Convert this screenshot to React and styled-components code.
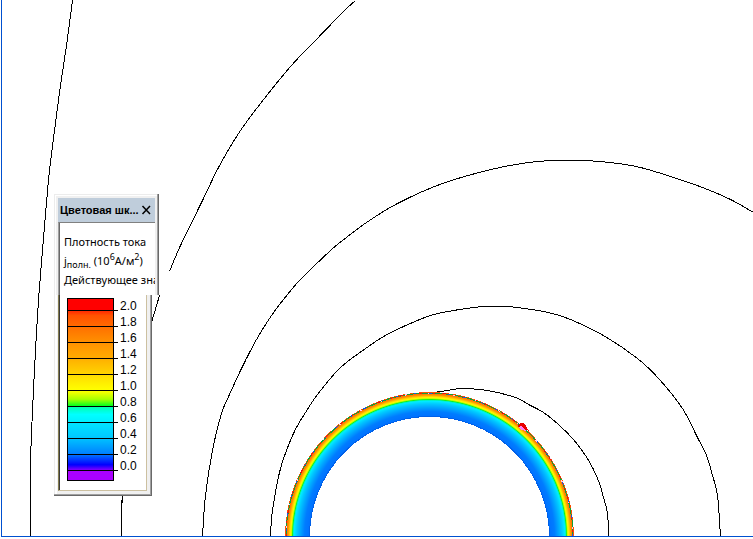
import React, { useState } from 'react';
import styled, { createGlobalStyle } from 'styled-components';

const GlobalStyle = createGlobalStyle`
  body {
    margin: 0;
    background: #fff;
    overflow: hidden;
  }
`;

const Workspace = styled.main`
  position: relative;
  min-height: 100vh;
  font-family: Tahoma, 'Noto Sans', sans-serif;
  font-size: 11px;
  color: #000;
`;

const Plot = styled.svg`
  display: block;
  width: 100%;
  shape-rendering: crispEdges;
`;

const FieldLine = styled.path`
  fill: none;
  stroke: #000;
  stroke-width: 1px;
`;

const Edge = styled.path`
  fill: none;
  stroke: ${props => props.$color};
  stroke-width: 1px;
  stroke-dasharray: ${props => props.$dash || 'none'};
`;

// floats over the plot
const Palette = styled.section`
  position: absolute;
  top: 194px;
  left: 54px;
`;

const PaletteHead = styled.div`
  box-sizing: border-box;
  width: 105px;
  height: 101px;
  padding: 4px 4px 0;
  background: #f0f0f0;
  box-shadow: inset -1px 0 #696969, inset -2px 0 #a0a0a0,
    inset 1px 1px #ececec, inset 2px 2px #fff;
`;

const TitleBar = styled.header`
  display: flex;
  align-items: center;
  justify-content: space-between;
  height: 24px;
  padding: 0 2px;
  background: #bfcddb;
`;

const Title = styled.h1`
  margin: 0;
  font-family: 'Liberation Sans', Arial, sans-serif;
  font-size: 11px;
  font-weight: 700;
  white-space: nowrap;
`;

const CloseButton = styled.button`
  display: flex;
  flex: none;
  padding: 0 1px 0 0;
  border: 0;
  background: none;
  cursor: pointer;
`;

const Caption = styled.div`
  height: 73px;
  box-sizing: border-box;
  padding: 9px 0 0 4px;
  border-top: 1px solid #808080;
  border-left: 1px solid #a0a0a0;
  box-shadow: inset 1px 0 #696969;
  background: #fff;
  overflow: hidden;
`;

const CaptionLine = styled.p`
  margin: 0;
  padding-left: 1px;
  line-height: 19px;
  white-space: nowrap;

  sub,
  sup {
    font-size: 9px;
    line-height: 1px;
  }
`;

const PaletteBody = styled.div`
  box-sizing: border-box;
  width: 98px;
  height: 201px;
  padding: 0 5px 5px 4px;
  background: #f0f0f0;
  box-shadow: inset -1px -1px #696969, inset -2px -2px #a0a0a0,
    inset 1px 0 #ececec, inset 3px 0 #fff;
`;

const ScaleArea = styled.div`
  display: flex;
  gap: 2px;
  box-sizing: border-box;
  height: 196px;
  padding: 3px 0 0 8px;
  border: solid;
  border-width: 0 1px 1px 1px;
  border-color: #ccc0a0 #ccc0a0 #ccc0a0 #857d50;
  box-shadow: inset 1px 0 #3c3c3c;
  background: #fff;
`;

const Bands = styled.div`
  width: 51px;
`;

const Band = styled.div`
  display: flex;
  align-items: flex-end;
  height: ${props => props.$height}px;

  &::after {
    content: '';
    width: 4px;
    height: 1px;
    background: ${props => (props.$tick ? '#000' : 'none')};
  }
`;

const Swatch = styled.div`
  box-sizing: border-box;
  width: 47px;
  height: 100%;
  border: solid #000;
  border-width: ${props => (props.$first ? 1 : 0)}px 1px 1px;
  background: linear-gradient(${props => props.$colors});
`;

const Labels = styled.ol`
  margin: 0;
  padding: 0;
  list-style: none;
  font-family: 'Liberation Sans', Arial, sans-serif;
  font-size: 12px;
  line-height: 16px;
`;

const bands = [
  { height: 13, colors: '#f00, #f00', tick: true },
  { height: 16, colors: '#ff2a00, #ff5200 30%, #ff6a00', tick: true },
  { height: 16, colors: '#ff7000, #ff9000', tick: true },
  { height: 16, colors: '#ff9200, #ffac00', tick: true },
  { height: 16, colors: '#ffb000, #ffd400', tick: true },
  { height: 16, colors: '#ffdc00, #ff0', tick: true },
  { height: 16, colors: '#ff0, #a8ff00 55%, #00ff20', tick: true },
  { height: 16, colors: '#00ffb0, #0ff 50%, #00f0ff', tick: true },
  { height: 16, colors: '#00e4ff, #00c8ff', tick: true },
  { height: 16, colors: '#00c0ff, #0080ff', tick: true },
  { height: 16, colors: '#0070ff, #0000ff 65%, #8000ff', tick: true },
  { height: 10, colors: '#a0f, #a0f', tick: false },
];

const values = ['2.0', '1.8', '1.6', '1.4', '1.2', '1.0', '0.8', '0.6', '0.4', '0.2', '0.0'];

const fieldLines = [
  [[72, 0], [66, 45], [60, 85], [54, 130], [49, 170], [46, 202], [42, 250], [38, 300], [35, 350], [32, 410], [30, 465], [30, 536]],
  [[355, 0], [343, 11], [312, 43], [290, 66], [260, 103], [238, 133], [218, 167], [202, 200], [180, 245], [169, 271]],
  [[159, 295], [151, 322], [140, 360], [128, 420], [123, 470], [122, 500], [121, 502], [121, 536]],
  [[202, 536], [205, 495], [212, 450], [221, 413], [229, 394], [241, 368], [256, 339], [271, 315], [287, 294], [300, 279], [330, 250], [342, 240], [366, 222], [397, 203], [442, 183], [495, 168], [537, 161], [580, 160], [610, 162], [640, 167], [673, 177], [702, 187], [730, 199], [753, 212]],
  [[270, 536], [272, 510], [280, 468], [293, 433], [305, 412], [317, 394], [340, 367], [368, 346], [383, 336], [403, 326], [430, 315], [453, 310], [483, 306], [502, 306], [517, 307], [548, 312], [570, 319], [603, 335], [637, 358], [659, 379], [682, 408], [697, 437], [706, 455], [712, 475], [717, 495], [720, 536]],
  [[434, 392], [453, 389], [463, 388], [487, 390], [515, 397], [528, 404], [543, 412], [558, 424], [573, 439], [585, 455], [593, 469], [599, 483], [603, 497], [607, 513], [608, 536]],
];

// Catmull-Rom spline through the points
const toPath = points =>
  points.slice(1).reduce((d, point, i) => {
    const start = points[i];
    const before = points[i - 1] || start;
    const after = points[i + 2] || point;
    const c1 = [0, 1].map(k => start[k] + (point[k] - before[k]) / 6);
    const c2 = [0, 1].map(k => point[k] - (after[k] - start[k]) / 6);
    return `${d}C${c1} ${c2} ${point}`;
  }, `M${points[0]}`);

const RING = 'M285 536.5A144.5 144.5 0 0 1 574 536.5H549.5A120 120 0 0 0 309.5 536.5Z';
const OUTER = 'M286 536.5A143.5 143.5 0 0 1 573 536.5';

const FieldPlot = () => (
  <Plot viewBox="0 0 753 539" role="img" aria-label="Плотность тока">
    <defs>
      <radialGradient
        id="density"
        gradientUnits="userSpaceOnUse"
        cx="429.5"
        cy="536.5"
        r="144"
      >
        <stop offset="0.833" stopColor="#0070ff" />
        <stop offset="0.868" stopColor="#007cff" />
        <stop offset="0.896" stopColor="#00a4ff" />
        <stop offset="0.92" stopColor="#00c8ff" />
        <stop offset="0.94" stopColor="#00ecff" />
        <stop offset="0.947" stopColor="#00f4b0" />
        <stop offset="0.951" stopColor="#10f020" />
        <stop offset="0.957" stopColor="#b0ff00" />
        <stop offset="0.963" stopColor="#fff800" />
        <stop offset="0.972" stopColor="#ffd000" />
        <stop offset="0.982" stopColor="#ff9400" />
        <stop offset="1" stopColor="#ff5000" />
      </radialGradient>
    </defs>
    {fieldLines.map((points, index) => (
      <FieldLine key={index} d={toPath(points)} transform="translate(0.5 0.5)" />
    ))}
    <path d={RING} fill="url(#density)" />
    <Edge d={OUTER} $color="#10a038" />
    <Edge d={OUTER} $color="#e01818" $dash="3 11 2 7 4 16" />
    <Edge d={OUTER} $color="#2050e0" $dash="0 6 2 13 3 10" />
    <Edge d={OUTER} $color="#ffc8f0" $dash="0 9 2 21 1 15" />
    <Edge d="M309.5 536.5A120 120 0 0 1 549.5 536.5" $color="#0060e8" />
    <path d="M517 426L521 423L524 423L529 431L524 429Z" fill="#e80000" />
    <path d="M518 427L521 426L526 431L522 430Z" fill="#ff80f0" />
    <Edge d="M1.5 0V536.5H753" $color="#0050d0" />
  </Plot>
);

const ColorScale = ({ onClose }) => (
  <Palette aria-label="Цветовая шкала">
    <PaletteHead>
      <TitleBar>
        <Title>Цветовая шк...</Title>
        <CloseButton type="button" aria-label="Закрыть" onClick={onClose}>
          <svg width="11" height="10" viewBox="0 0 11 10">
            <path d="M1.5 1L9 9M9 1L1.5 9" stroke="#000" strokeWidth="1.5" />
          </svg>
        </CloseButton>
      </TitleBar>
      <Caption>
        <CaptionLine>Плотность тока</CaptionLine>
        <CaptionLine>
          j<sub>полн.</sub> (10<sup>6</sup>А/м<sup>2</sup>)
        </CaptionLine>
        <CaptionLine>Действующее значение</CaptionLine>
      </Caption>
    </PaletteHead>
    <PaletteBody>
      <ScaleArea>
        <Bands>
          {bands.map((band, index) => (
            <Band key={band.colors} $height={band.height} $tick={band.tick}>
              <Swatch $colors={band.colors} $first={index === 0} />
            </Band>
          ))}
        </Bands>
        <Labels>
          {values.map(value => (
            <li key={value}>{value}</li>
          ))}
        </Labels>
      </ScaleArea>
    </PaletteBody>
  </Palette>
);

const App = () => {
  const [isScaleOpen, setIsScaleOpen] = useState(true);

  return (
    <>
      <GlobalStyle />
      <Workspace>
        <FieldPlot />
        {isScaleOpen && <ColorScale onClose={() => setIsScaleOpen(false)} />}
      </Workspace>
    </>
  );
};

export default App;
